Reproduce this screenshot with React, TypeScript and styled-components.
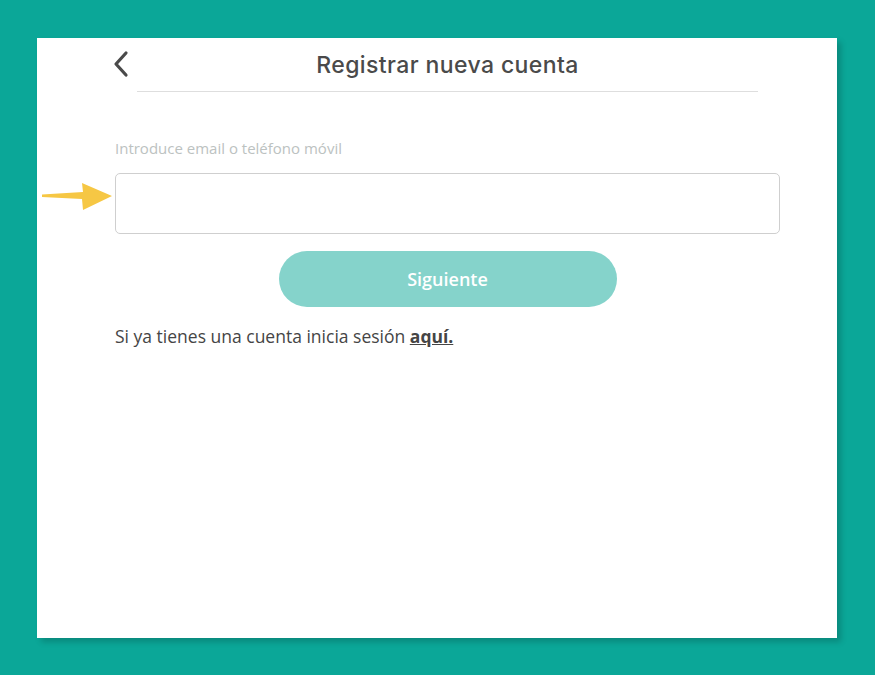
import styled, { createGlobalStyle } from "styled-components";

const GlobalStyle = createGlobalStyle`
  html, body {
    margin: 0;
    padding: 0;
    background: #0ba798;
  }
  * {
    box-sizing: border-box;
  }
`

const Page = styled.div`
  width: 875px;
  height: 675px;
  padding: 38px 0 0 37px;
  background: #0ba798;
`

const Panel = styled.div`
  width: 800px;
  height: 600px;
  background: #fff;
  box-shadow: 4px 4px 6px rgba(0, 0, 0, 0.18);
  padding: 0 57px 0 78px;
  display: flex;
  flex-direction: column;
`

const Header = styled.div`
  position: relative;
  height: 53px;
  display: flex;
  align-items: center;
  justify-content: center;
`

const BackButton = styled.button`
  position: absolute;
  left: -6px;
  top: 12px;
  width: 24px;
  height: 28px;
  padding: 0;
  border: none;
  background: none;
  cursor: pointer;
  display: flex;
  align-items: center;
  justify-content: center;
`

const Title = styled.h1`
  margin: 0;
  padding-top: 1px;
  font-family: Inter, "Noto Sans", sans-serif;
  font-weight: 500;
  font-size: 23px;
  color: #4a4a4a;
  letter-spacing: 0.4px;
`

const Divider = styled.hr`
  margin: 0 22px;
  border: none;
  border-top: 1px solid #dedede;
`

const Label = styled.label`
  margin-top: 46px;
  font-family: "Open Sans", sans-serif;
  font-size: 15px;
  color: #bcc2c1;
`

const FieldRow = styled.div`
  position: relative;
  margin-top: 15px;
`

const Input = styled.input`
  display: block;
  width: 100%;
  height: 61px;
  border: 1px solid #cfcfcf;
  border-radius: 5px;
  outline: none;
  padding: 0 14px;
  font-family: "Open Sans", sans-serif;
  font-size: 16px;
`

const Pointer = styled.svg`
  position: absolute;
  left: -74px;
  top: 9px;
`

const NextButton = styled.button`
  align-self: center;
  margin-top: 17px;
  width: 338px;
  height: 56px;
  border: none;
  border-radius: 28px;
  background: #85d3cb;
  color: #fff;
  font-family: "Open Sans", sans-serif;
  font-weight: 600;
  font-size: 18px;
  cursor: pointer;
`

const LoginText = styled.p`
  margin: 17px 0 0;
  font-family: "Open Sans", sans-serif;
  font-size: 17.5px;
  color: #454545;
`

const LoginLink = styled.a`
  font-weight: 700;
  color: #454545;
  text-decoration: underline;
`

const App = () => {
    return (
        <>
            <GlobalStyle />
            <Page>
                <Panel>
                    <Header>
                        <BackButton aria-label="Volver">
                            <svg width="18" height="28" viewBox="0 0 18 28">
                                <path d="M14 3 L4 14 L14 25" fill="none" stroke="#4a4a4a" strokeWidth="3.2" strokeLinecap="round" strokeLinejoin="round" />
                            </svg>
                        </BackButton>
                        <Title>Registrar nueva cuenta</Title>
                    </Header>
                    <Divider />
                    <Label>Introduce email o teléfono móvil</Label>
                    <FieldRow>
                        <Pointer width="74" height="30" viewBox="0 0 74 30">
                            <path d="M1 12.5 L42 10 L41 1 L71 14 L42 28 L41 17 L1 15 Z" fill="#f6c744" />
                        </Pointer>
                        <Input type="text" />
                    </FieldRow>
                    <NextButton>Siguiente</NextButton>
                    <LoginText>
                        Si ya tienes una cuenta inicia sesión <LoginLink href="#">aquí.</LoginLink>
                    </LoginText>
                </Panel>
            </Page>
        </>
    )
}

export default App;
